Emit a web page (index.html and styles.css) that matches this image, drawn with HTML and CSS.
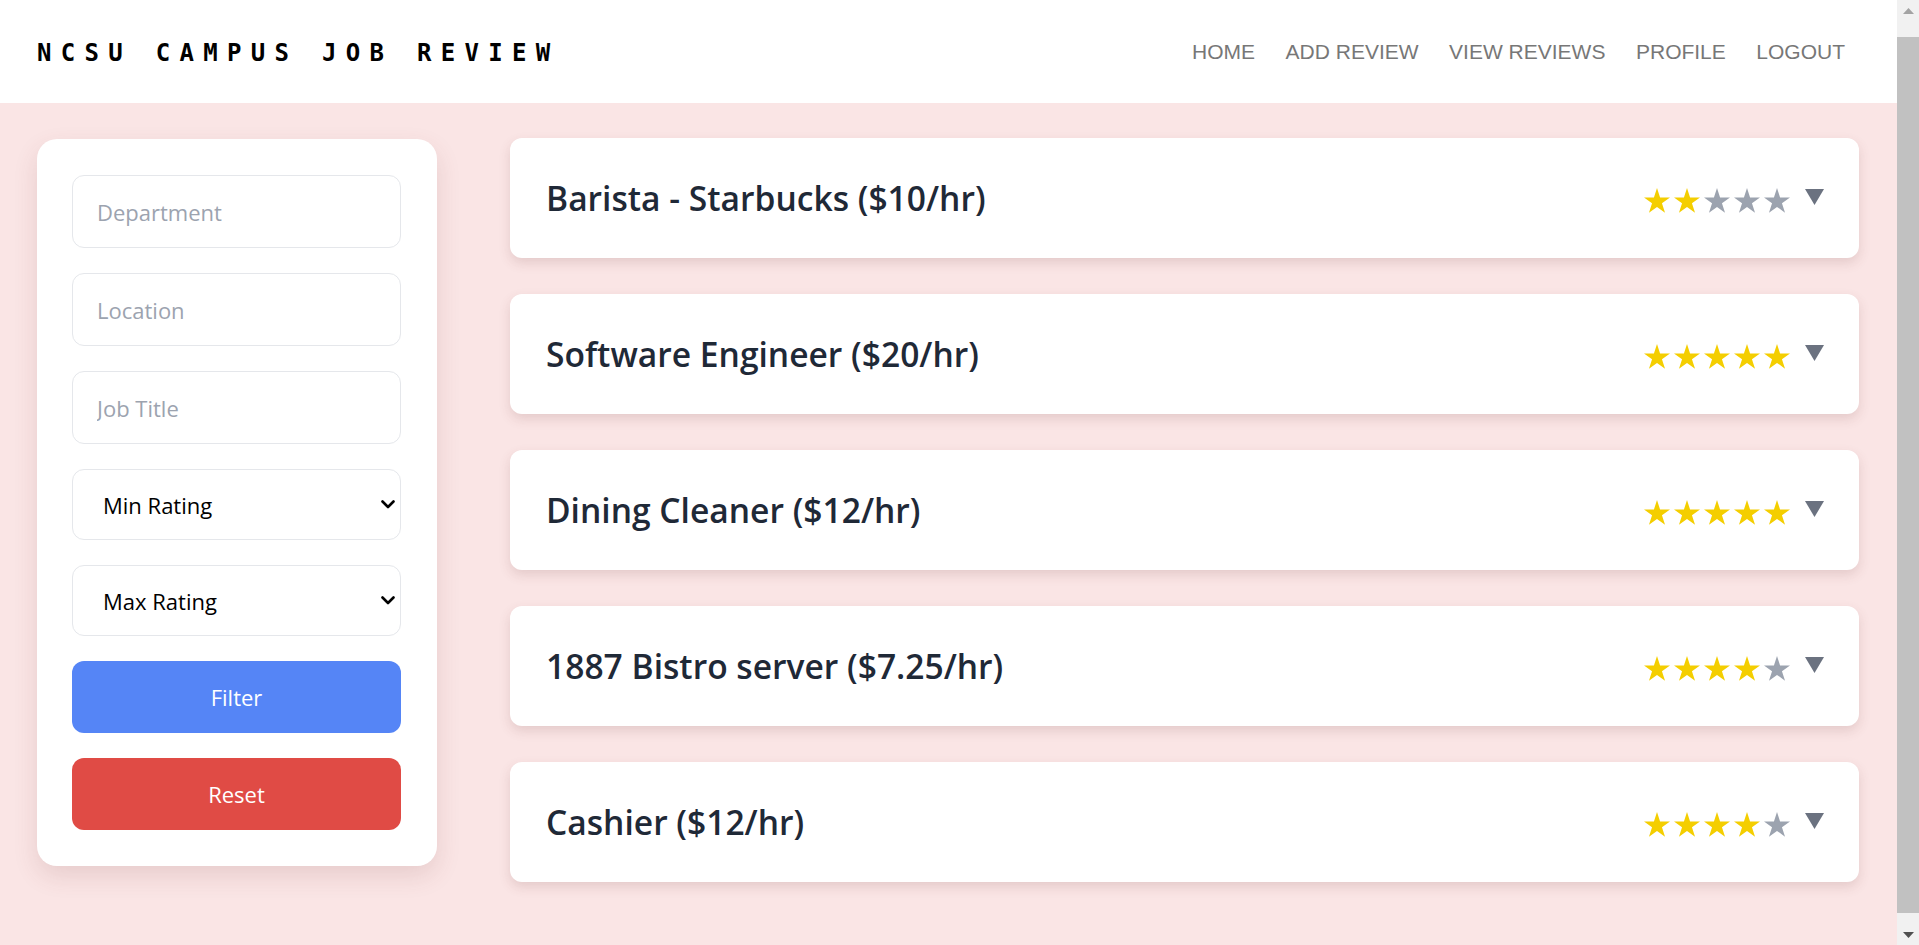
FILE: index.html
```html
<!DOCTYPE html>
<html lang="en">
<head>
<meta charset="utf-8">
<title>NCSU Campus Job Review</title>
<link rel="stylesheet" href="styles.css">
</head>
<body>
<svg class="defs" width="0" height="0" aria-hidden="true">
  <symbol id="star" viewBox="0 0 26 25">
    <polygon points="13,0 16.07,9.45 26,9.45 17.96,15.28 21.03,24.73 13,18.89 4.97,24.73 8.04,15.28 0,9.45 9.93,9.45"/>
  </symbol>
  <symbol id="tri" viewBox="0 0 19 16">
    <polygon points="0,0 19,0 9.5,16"/>
  </symbol>
  <symbol id="chev" viewBox="0 0 14 9">
    <polyline points="1.5,1.5 7,7 12.5,1.5" fill="none" stroke="currentColor" stroke-width="2.6" stroke-linecap="round" stroke-linejoin="round"/>
  </symbol>
</svg>

<header class="topbar">
  <div class="logo">NCSU CAMPUS JOB REVIEW</div>
  <nav class="nav">
    <a class="nav-link" href="#">HOME</a>
    <a class="nav-link" href="#">ADD REVIEW</a>
    <a class="nav-link" href="#">VIEW REVIEWS</a>
    <a class="nav-link" href="#">PROFILE</a>
    <a class="nav-link" href="#">LOGOUT</a>
  </nav>
</header>

<main class="page">
  <aside class="filters">
    <input class="field field-text" type="text" placeholder="Department">
    <input class="field field-text" type="text" placeholder="Location">
    <input class="field field-text" type="text" placeholder="Job Title">
    <div class="select-wrap">
      <select class="field field-select"><option>Min Rating</option></select>
      <svg class="chev"><use href="#chev"/></svg>
    </div>
    <div class="select-wrap">
      <select class="field field-select"><option>Max Rating</option></select>
      <svg class="chev"><use href="#chev"/></svg>
    </div>
    <button class="btn btn-filter" type="button">Filter</button>
    <button class="btn btn-reset" type="button">Reset</button>
  </aside>

  <section class="jobs">
    <article class="job">
      <h2 class="job-title">Barista - Starbucks ($10/hr)</h2>
      <div class="job-meta">
        <span class="stars">
          <svg class="star on"><use href="#star"/></svg><svg class="star on"><use href="#star"/></svg><svg class="star"><use href="#star"/></svg><svg class="star"><use href="#star"/></svg><svg class="star"><use href="#star"/></svg>
        </span>
        <svg class="toggle"><use href="#tri"/></svg>
      </div>
    </article>
    <article class="job">
      <h2 class="job-title">Software Engineer ($20/hr)</h2>
      <div class="job-meta">
        <span class="stars">
          <svg class="star on"><use href="#star"/></svg><svg class="star on"><use href="#star"/></svg><svg class="star on"><use href="#star"/></svg><svg class="star on"><use href="#star"/></svg><svg class="star on"><use href="#star"/></svg>
        </span>
        <svg class="toggle"><use href="#tri"/></svg>
      </div>
    </article>
    <article class="job">
      <h2 class="job-title">Dining Cleaner ($12/hr)</h2>
      <div class="job-meta">
        <span class="stars">
          <svg class="star on"><use href="#star"/></svg><svg class="star on"><use href="#star"/></svg><svg class="star on"><use href="#star"/></svg><svg class="star on"><use href="#star"/></svg><svg class="star on"><use href="#star"/></svg>
        </span>
        <svg class="toggle"><use href="#tri"/></svg>
      </div>
    </article>
    <article class="job">
      <h2 class="job-title">1887 Bistro server ($7.25/hr)</h2>
      <div class="job-meta">
        <span class="stars">
          <svg class="star on"><use href="#star"/></svg><svg class="star on"><use href="#star"/></svg><svg class="star on"><use href="#star"/></svg><svg class="star on"><use href="#star"/></svg><svg class="star"><use href="#star"/></svg>
        </span>
        <svg class="toggle"><use href="#tri"/></svg>
      </div>
    </article>
    <article class="job">
      <h2 class="job-title">Cashier ($12/hr)</h2>
      <div class="job-meta">
        <span class="stars">
          <svg class="star on"><use href="#star"/></svg><svg class="star on"><use href="#star"/></svg><svg class="star on"><use href="#star"/></svg><svg class="star on"><use href="#star"/></svg><svg class="star"><use href="#star"/></svg>
        </span>
        <svg class="toggle"><use href="#tri"/></svg>
      </div>
    </article>
  </section>
</main>

<div class="scrollbar" aria-hidden="true">
  <div class="sb-btn">
    <svg class="sb-arrow sb-up" viewBox="0 0 11 6"><polygon points="0,6 11,6 5.5,0"/></svg>
  </div>
  <div class="sb-track"><div class="sb-thumb"></div></div>
  <div class="sb-btn">
    <svg class="sb-arrow sb-down" viewBox="0 0 11 6"><polygon points="0,0 11,0 5.5,6"/></svg>
  </div>
</div>
</body>
</html>
```

FILE: styles.css
```css
* { box-sizing: border-box; }

html, body { margin: 0; padding: 0; }

body {
  background: #fae5e5;
  font-family: "Open Sans", "Noto Sans", sans-serif;
  color: #1f2937;
  padding-right: 22px;
}

.defs { position: absolute; width: 0; height: 0; overflow: hidden; }

/* Fake classic scrollbar drawn over the right gutter */
.scrollbar {
  position: fixed;
  top: 0;
  right: 0;
  width: 22px;
  height: 100vh;
  background: #f1f1f1;
  display: flex;
  flex-direction: column;
}

.sb-btn {
  height: 22px;
  flex: none;
  display: flex;
  align-items: center;
  justify-content: center;
}

.sb-arrow { width: 11px; height: 6px; }
.sb-up { fill: #a3a3a3; }
.sb-down { fill: #505050; margin-top: 2px; }

.sb-track {
  flex: 1;
  padding: 15px 0 10px 0;
  display: flex;
}

.sb-thumb {
  flex: 1;
  background: #c1c1c1;
}

/* Header */
.topbar {
  height: 103px;
  background: #ffffff;
  display: flex;
  align-items: center;
  justify-content: space-between;
  padding: 0 52px 0 37px;
}

.logo {
  font-family: "DejaVu Sans Mono", "Liberation Mono", monospace;
  font-weight: 700;
  font-size: 24px;
  letter-spacing: 9.3px;
  color: #000;
  margin-top: 2px;
}

.nav {
  display: flex;
  gap: 30.5px;
  font-family: "Liberation Sans", Arial, sans-serif;
  font-size: 21px;
}

.nav-link {
  color: #777777;
  text-decoration: none;
}

/* Page */
.page {
  display: flex;
  align-items: flex-start;
  gap: 73px;
  padding: 35px 38px 36px 37px;
}

/* Sidebar filters */
.filters {
  width: 400px;
  flex: none;
  background: #ffffff;
  border-radius: 20px;
  padding: 36px 36px 36px 35px;
  display: flex;
  flex-direction: column;
  gap: 25px;
  box-shadow: 0 10px 24px rgba(120, 60, 60, 0.14);
  margin-top: 1px;
}

.field {
  width: 100%;
  border: 1px solid #e5e7eb;
  border-radius: 12px;
  background: #ffffff;
  font-family: "Open Sans", "Noto Sans", sans-serif;
  font-size: 22px;
  outline: none;
}

.field-text {
  height: 73px;
  padding: 0 24px;
  color: #1f2937;
}

.field-text::placeholder { color: #9ca3af; }

.select-wrap { position: relative; }

.field-select {
  height: 71px;
  padding: 0 40px 0 30px;
  color: #000;
  appearance: none;
  -webkit-appearance: none;
  display: block;
}

.chev {
  position: absolute;
  right: 6px;
  top: 31px;
  width: 14px;
  height: 9px;
  color: #000;
  pointer-events: none;
}

.btn {
  height: 72px;
  border: none;
  border-radius: 12px;
  color: #ffffff;
  font-family: "Open Sans", "Noto Sans", sans-serif;
  font-size: 22px;
  cursor: pointer;
}

.btn-filter { background: #5585f6; }
.btn-reset { background: #e04b45; }

/* Job list */
.jobs {
  flex: 1;
  display: flex;
  flex-direction: column;
  gap: 36px;
}

.job {
  height: 120px;
  background: #ffffff;
  border-radius: 12px;
  padding: 0 35px 0 36px;
  display: flex;
  align-items: center;
  justify-content: space-between;
  box-shadow: 0 5px 12px rgba(120, 60, 60, 0.16);
}

.job-title {
  margin: 0;
  font-size: 33.6px;
  font-weight: 600;
  color: #1f2937;
  line-height: 1.2;
}

.job-meta {
  display: flex;
  align-items: center;
  gap: 15px;
}

.stars {
  display: flex;
  gap: 4px;
  margin-top: 4px;
}

.star {
  width: 26px;
  height: 25px;
  fill: #9ca3af;
}

.star.on { fill: #f4ce00; }

.toggle {
  width: 19px;
  height: 16px;
  fill: #6b7280;
  margin-bottom: 2px;
}
```
